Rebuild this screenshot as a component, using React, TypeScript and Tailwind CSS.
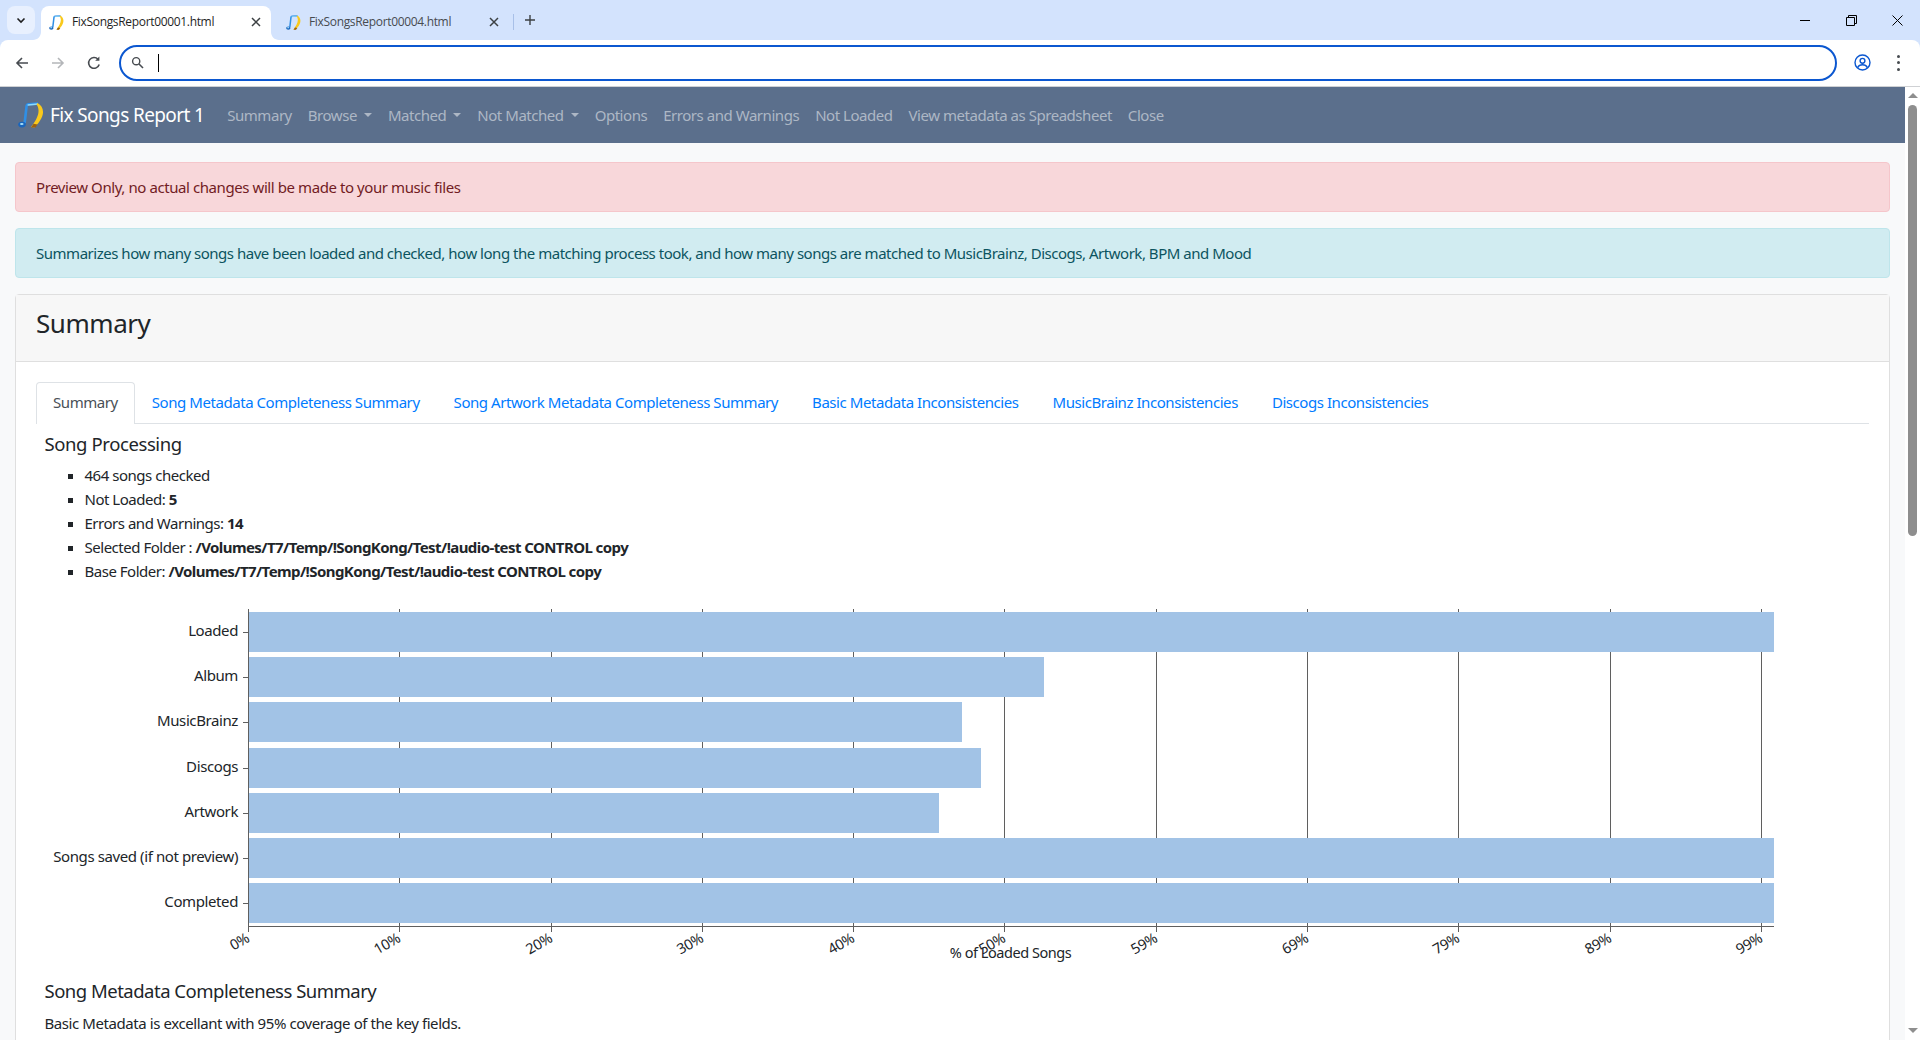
import React from "react";

const Note = ({ size = 16 }: { size?: number }) => (
  <svg width={size} height={size} viewBox="0 0 26 26" className="shrink-0">
    <path d="M6.6 21 L8.6 4 Q8.8 2.4 10.5 2.3 L20 1.6" fill="none" stroke="#2f8fe6" strokeWidth="2.6" />
    <path d="M9.6 3 L20 2" fill="none" stroke="#8edafc" strokeWidth="1.4" />
    <ellipse cx="4" cy="22.6" rx="3.8" ry="2.8" fill="#1a66bd" />
    <ellipse cx="3.8" cy="22" rx="1.8" ry="1.1" fill="#a8e2fb" />
    <path d="M19.5 1 C25 4 26.5 10 23.5 16 C21.5 20 19 23 16.5 25.5 L13 25 C17 20 21 13 20.5 8 C20.3 5.5 19.6 3.5 18.5 2.5 Z" fill="#f9c91c" />
    <path d="M13 25.6 L17.5 25.6 L19.5 22.4 L15.6 21.8 Z" fill="#9a5f12" />
  </svg>
);

const Arrow = ({ flip, color }: { flip?: boolean; color: string }) => (
  <svg width="16" height="16" viewBox="0 0 16 16" className={flip ? "rotate-180" : ""}>
    <path d="M14 8H3M8 3 3 8l5 5" fill="none" stroke={color} strokeWidth="1.6" />
  </svg>
);

const Caret = () => (
  <span className="ml-[7px] inline-block h-0 w-0 border-x-[4.5px] border-t-[4.5px] border-x-transparent border-t-[#adb7c5]" />
);

const CloseX = () => (
  <svg width="10" height="10" viewBox="0 0 10 10" className="shrink-0">
    <path d="M1 1l8 8M9 1 1 9" stroke="#3c4043" strokeWidth="1.5" />
  </svg>
);

const bars = [
  { label: "Loaded", end: 1774, y: 613 },
  { label: "Album", end: 1044, y: 658 },
  { label: "MusicBrainz", end: 962, y: 703 },
  { label: "Discogs", end: 981, y: 749 },
  { label: "Artwork", end: 939, y: 794 },
  { label: "Songs saved (if not preview)", end: 1774, y: 839 },
  { label: "Completed", end: 1774, y: 884 },
];
const ticks = [
  [248.5, "0%"],
  [399.5, "10%"],
  [551.5, "20%"],
  [702.5, "30%"],
  [853.5, "40%"],
  [1004.5, "50%"],
  [1156.5, "59%"],
  [1307.5, "69%"],
  [1458.5, "79%"],
  [1610.5, "89%"],
  [1761.5, "99%"],
] as const;

const Chart = () => (
  <svg width="1833" height="375" viewBox="36 600 1833 375" className="block" fontFamily="'Noto Sans', sans-serif" fontSize="15" fill="#212529">
    {ticks.map(([x]) => (
      <line key={x} x1={x} x2={x} y1={610} y2={933} stroke="#5f5f5f" strokeWidth="1" />
    ))}
    {bars.map((b) => (
      <g key={b.label}>
        <rect x={249} y={b.y} width={b.end - 249} height={40} fill="#a2c3e6" />
        <line x1={243} x2={249} y1={b.y + 20.5} y2={b.y + 20.5} stroke="#5f5f5f" />
        <text x={238} y={b.y + 24} textAnchor="end" letterSpacing="-0.4">
          {b.label}
        </text>
      </g>
    ))}
    <line x1={249} x2={1774} y1={927.5} y2={927.5} stroke="#5f5f5f" strokeWidth="1" />
    {ticks.map(([x, t]) => (
      <text key={t} x={x + 2} y={942} textAnchor="end" fontSize="14.5" letterSpacing="-0.3" transform={`rotate(-30 ${x + 2} 942)`}>
        {t}
      </text>
    ))}
    <text x={1010.5} y={959} textAnchor="middle" fontSize="14.5" letterSpacing="-0.45">
      % of Loaded Songs
    </text>
  </svg>
);

const nav = [
  ["Summary", false],
  ["Browse", true],
  ["Matched", true],
  ["Not Matched", true],
  ["Options", false],
  ["Errors and Warnings", false],
  ["Not Loaded", false],
  ["View metadata as Spreadsheet", false],
  ["Close", false],
] as const;

const tabs = [
  "Song Metadata Completeness Summary",
  "Song Artwork Metadata Completeness Summary",
  "Basic Metadata Inconsistencies",
  "MusicBrainz Inconsistencies",
  "Discogs Inconsistencies",
];

export default function App() {
  return (
    <div className="flex h-[1040px] w-[1920px] flex-col overflow-hidden bg-[#d3e3fd] font-['Noto_Sans',sans-serif] text-[15px] leading-6 tracking-[-0.48px] text-[#212529]">
      {/* tab strip */}
      <div className="flex h-10 shrink-0 items-end pl-[7px] font-['Open_Sans',sans-serif] text-[12px] tracking-[-0.33px]">
        <div className="mb-[6px] flex h-7 w-7 items-center justify-center rounded-lg bg-[#e8f0fe]">
          <svg width="10" height="10" viewBox="0 0 10 10">
            <path d="M1.5 3.5 5 7l3.5-3.5" fill="none" stroke="#1f1f1f" strokeWidth="1.6" />
          </svg>
        </div>
        <div className="relative ml-[6px] flex h-[34px] w-[230px] items-center rounded-t-lg bg-white pb-[2px] pl-2 pr-[10px]">
          <svg width="8" height="8" viewBox="0 0 8 8" className="absolute bottom-0 left-[-8px]">
            <path d="M8 0v8H0C4.4 8 8 4.4 8 0z" fill="#fff" />
          </svg>
          <svg width="8" height="8" viewBox="0 0 8 8" className="absolute bottom-0 right-[-8px]">
            <path d="M0 0v8h8C3.6 8 0 4.4 0 0z" fill="#fff" />
          </svg>
          <Note size={15} />
          <span className="ml-[8px] flex-1 text-[#1f1f1f]">FixSongsReport00001.html</span>
          <CloseX />
        </div>
        <div className="flex h-[34px] w-[243px] items-center pb-[2px] pl-[15px]">
          <Note size={15} />
          <span className="ml-[8px] flex-1 text-[#474b50]">FixSongsReport00004.html</span>
          <CloseX />
          <span className="ml-[14px] h-4 w-px bg-[#a8c0e8]" />
        </div>
        <div className="mb-[14px] ml-[10px] flex h-3 w-3 items-center justify-center">
          <svg width="12" height="12" viewBox="0 0 12 12">
            <path d="M6 1v10M1 6h10" stroke="#3c4043" strokeWidth="1.4" />
          </svg>
        </div>
        <div className="ml-auto flex h-10 items-center">
          <div className="flex w-[46px] justify-center">
            <span className="h-px w-[10px] bg-black" />
          </div>
          <div className="flex w-[46px] justify-center">
            <svg width="11" height="11" viewBox="0 0 11 11">
              <path d="M.5 2.5h8v8h-8zM2.5 2.5v-2h8v8h-2" fill="none" stroke="#000" />
            </svg>
          </div>
          <div className="flex w-[46px] justify-center">
            <svg width="11" height="11" viewBox="0 0 11 11">
              <path d="M.5.5l10 10M10.5.5l-10 10" stroke="#000" />
            </svg>
          </div>
        </div>
      </div>
      {/* toolbar */}
      <div className="flex h-[47px] shrink-0 items-center rounded-t-lg border-b border-[#cfd1d4] bg-white pb-[1px]">
        <div className="ml-[14px] flex w-[108px] items-center">
          <span className="w-9">
            <Arrow color="#474b50" />
          </span>
          <span className="w-9">
            <Arrow flip color="#b4b6b9" />
          </span>
          <svg width="16" height="16" viewBox="0 0 16 16">
            <path d="M13.2 9.5A5.4 5.4 0 1 1 12 4.2" fill="none" stroke="#474b50" strokeWidth="1.6" />
            <path d="M13.4 1.6v4.2H9.2z" fill="#474b50" />
          </svg>
        </div>
        <div className="ml-[-3px] flex h-9 w-[1718px] items-center rounded-full border-2 border-[#0b57d0] pl-[10px]">
          <svg width="13" height="13" viewBox="0 0 13 13">
            <circle cx="5.2" cy="5.2" r="3.6" fill="none" stroke="#474b50" strokeWidth="1.4" />
            <path d="M8 8l4 4" stroke="#474b50" strokeWidth="1.6" />
          </svg>
          <span className="ml-[14px] h-[18px] w-px bg-black" />
        </div>
        <div className="ml-[15px] flex w-[20px] justify-center">
          <svg width="17" height="17" viewBox="0 0 17 17">
            <circle cx="8.5" cy="8.5" r="7.5" fill="none" stroke="#0b57d0" strokeWidth="1.4" />
            <circle cx="8.5" cy="6.8" r="2.4" fill="none" stroke="#0b57d0" strokeWidth="1.4" />
            <path d="M3.6 13.6c1-2 3-2.8 4.9-2.8s3.9.8 4.9 2.8" fill="none" stroke="#0b57d0" strokeWidth="1.4" />
          </svg>
        </div>
        <div className="ml-[16px] flex w-[20px] flex-col items-center gap-[3.5px]">
          <span className="h-[3px] w-[3px] rounded-full bg-[#474b50]" />
          <span className="h-[3px] w-[3px] rounded-full bg-[#474b50]" />
          <span className="h-[3px] w-[3px] rounded-full bg-[#474b50]" />
        </div>
      </div>
      <div className="flex min-h-0 flex-1">
        <div className="min-w-0 flex-1 overflow-hidden bg-[#f8f9fa]">
          {/* navbar */}
          <nav className="flex h-14 items-center bg-[#5b6f8c] pl-[18px]">
            <Note size={26} />
            <span className="ml-[6px] mr-[15px] text-[19px] tracking-[-0.62px] text-white">Fix Songs Report 1</span>
            {nav.map(([n, c]) => (
              <span key={n} className="flex items-center px-2 tracking-[-0.46px] text-[#adb7c5]">
                {n}
                {c && <Caret />}
              </span>
            ))}
          </nav>
          <div className="px-[15px] pt-[19px]">
            <div className="mb-4 rounded border border-[#f5c6cb] bg-[#f8d7da] px-5 py-3 tracking-[-0.42px] text-[#721c24]">
              Preview Only, no actual changes will be made to your music files
            </div>
            <div className="mb-4 rounded border border-[#bee5eb] bg-[#d1ecf1] px-5 py-3 text-[#0c5460]">
              Summarizes how many songs have been loaded and checked, how long the matching process took, and how many songs are matched to MusicBrainz, Discogs, Artwork, BPM and Mood
            </div>
            <div className="rounded-t border border-[#dfdfdf] bg-white pb-10">
              <div className="flex h-[67px] items-center border-b border-[#dfdfdf] bg-[#f7f7f7] px-5 pb-[10px] text-[26px] tracking-[-0.45px]">
                Summary
              </div>
              <div className="px-5 pt-5">
                <div className="flex h-[42px] border-b border-[#dee2e6] tracking-[-0.44px]">
                  <div className="h-[42px] rounded-t border border-b-0 border-[#dee2e6] bg-white px-4 py-[7px] text-[#495057]">Summary</div>
                  {tabs.map((t) => (
                    <div key={t} className="border border-transparent px-4 py-[7px] text-[#007bff]">
                      {t}
                    </div>
                  ))}
                </div>
                <div className="pl-[8.5px]">
                  <div className="mt-[8px] h-6 text-[18.5px] tracking-[-0.4px]">Song Processing</div>
                  <ul className="mt-[7px] list-[square] pl-10">
                    <li>464 songs checked</li>
                    <li>
                      Not Loaded: <b className="tracking-[-0.58px]">5</b>
                    </li>
                    <li>
                      Errors and Warnings: <b className="tracking-[-0.58px]">14</b>
                    </li>
                    <li>
                      Selected Folder : <b className="tracking-[-0.58px]">/Volumes/T7/Temp/!SongKong/Test/!audio-test CONTROL copy</b>
                    </li>
                    <li>
                      Base Folder: <b className="tracking-[-0.58px]">/Volumes/T7/Temp/!SongKong/Test/!audio-test CONTROL copy</b>
                    </li>
                  </ul>
                </div>
                <div className="mt-[16px]">
                  <Chart />
                </div>
                <div className="pl-[8.5px]">
                  <div className="mt-[3px] h-7 text-[18.5px] leading-7 tracking-[-0.5px]">Song Metadata Completeness Summary</div>
                  <p className="mt-[6px] tracking-[-0.42px]">Basic Metadata is excellant with 95% coverage of the key fields.</p>
                </div>
              </div>
            </div>
          </div>
        </div>
        {/* scrollbar */}
        <div className="flex w-[15px] shrink-0 flex-col items-center bg-white pt-[6px]">
          <span className="h-0 w-0 border-x-[5px] border-b-[5px] border-x-transparent border-b-[#8e8e8e]" />
          <span className="mt-[7px] h-[431px] w-[9px] rounded-full bg-[#8e8e8e]" />
          <span className="mb-[7px] mt-auto h-0 w-0 border-x-[5px] border-t-[5px] border-x-transparent border-t-[#8e8e8e]" />
        </div>
      </div>
    </div>
  );
}
